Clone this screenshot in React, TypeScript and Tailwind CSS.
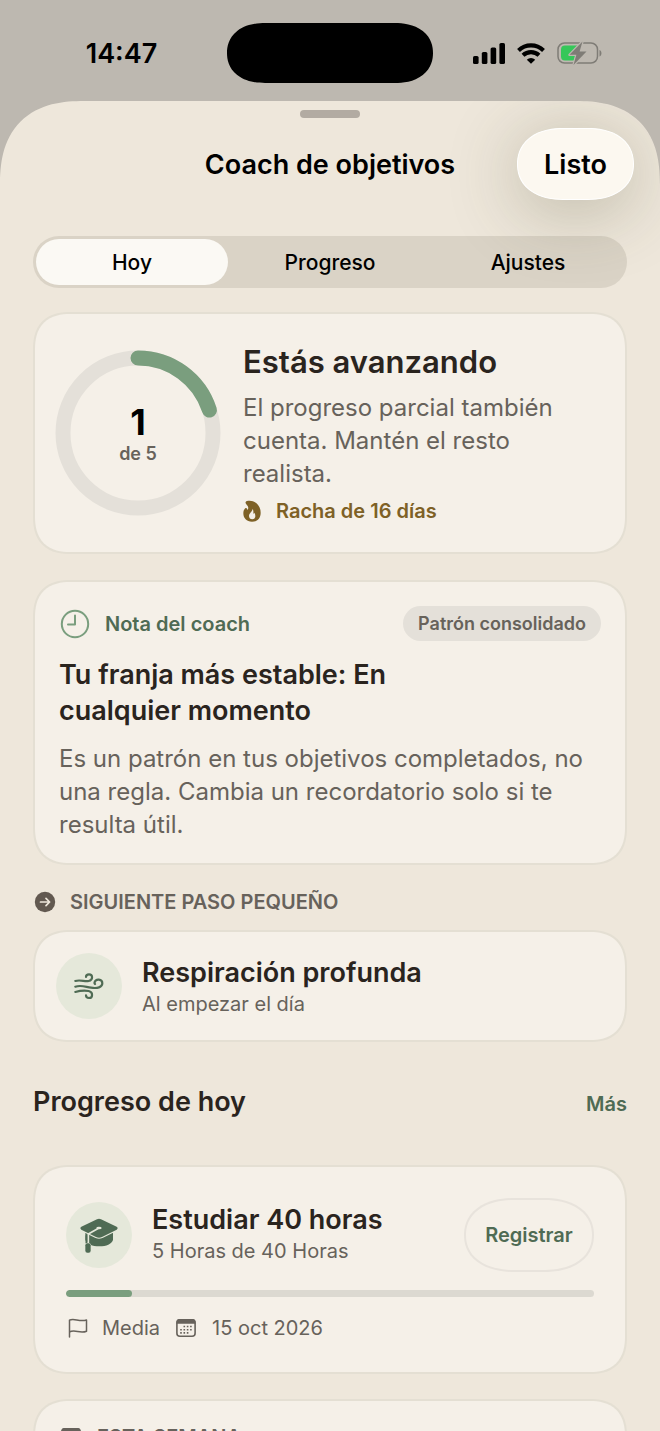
import { useState } from 'react';
import type { ReactNode } from 'react';

type Tab = 'Hoy' | 'Progreso' | 'Ajustes';

const TABS: Tab[] = ['Hoy', 'Progreso', 'Ajustes'];

function SignalIcon() {
  return (
    <svg width="32" height="21" viewBox="0 0 32 21" aria-hidden="true">
      <rect x="0" y="13" width="5.6" height="8" rx="1.6" />
      <rect x="8.8" y="9" width="5.6" height="12" rx="1.6" />
      <rect x="17.6" y="4.5" width="5.6" height="16.5" rx="1.6" />
      <rect x="26.4" y="0" width="5.6" height="21" rx="1.6" />
    </svg>
  );
}

function WifiIcon() {
  return (
    <svg width="28" height="21" viewBox="0 0 28 21" aria-hidden="true">
      <g fill="none" stroke="black" strokeWidth="4.1">
        <path d="M1.5 7.4a18 18 0 0 1 25 0" />
        <path d="M6 12.3a11.6 11.6 0 0 1 16 0" />
      </g>
      <path d="M14 20.8l-4.2-4.1a6 6 0 0 1 8.4 0z" />
    </svg>
  );
}

function BatteryIcon() {
  return (
    <svg width="46" height="24" viewBox="0 0 46 24" aria-hidden="true">
      <rect x="1" y="2" width="39.5" height="20" rx="6.5" fill="none" stroke="#7f7c76" strokeWidth="1.5" />
      <path d="M42.5 9v6.4c2.6-.8 2.6-5.6 0-6.4z" fill="#7f7c76" />
      <path d="M8 4.500h13l-6 9H19l-2.200 6H8a4 4 0 0 1-4-4v-7a4 4 0 0 1 4-4z" fill="#35c759" />
      <path
        d="M25.500 0.500L12.500 13.800h6.900L16.500 24 29.500 10.500h-6.900z"
        fill="#7f7c76"
        stroke="#bdb8b0"
        strokeWidth="2.4"
        strokeLinejoin="round"
        paintOrder="stroke"
      />
    </svg>
  );
}

function FlameIcon() {
  return (
    <svg width="18" height="22" viewBox="0 0 54 66" aria-hidden="true">
      <path
        d="M12 3C32-2 53 13 53 38c0 17-10 27-26 27S1 55 1 40c0-7 2-12 6-15 2-2 4-1 5 1l2 4c3-5 2-11-2-14l-4-6c-1-3 0-6 4-7z"
        fill="#7e6126"
      />
      <path
        d="M29 26c0 8-11 13-11 22 0 6 4 10 10 10 5 0 9-4 9-10 0-4-1-7-3-10-1 2-2 3-3 3 1-5 0-11-2-15z"
        fill="#f5f0e8"
      />
    </svg>
  );
}

function ClockIcon() {
  return (
    <svg width="30" height="30" viewBox="0 0 30 30" fill="none" stroke="#7a9e7e" strokeWidth="2" aria-hidden="true">
      <circle cx="15" cy="15" r="13.2" />
      <path d="M15 6.500V15.500H8" strokeLinecap="round" strokeLinejoin="round" />
    </svg>
  );
}

function ArrowCircleIcon() {
  return (
    <svg width="22" height="22" viewBox="0 0 22 22" aria-hidden="true">
      <circle cx="11" cy="11" r="10.2" fill="#625950" />
      <path
        d="M6.500 11h9M12 7.400l3.600 3.600-3.600 3.600"
        fill="none"
        stroke="#eee7db"
        strokeWidth="1.7"
        strokeLinecap="round"
        strokeLinejoin="round"
      />
    </svg>
  );
}

function WindIcon() {
  return (
    <svg
      width="30"
      height="28"
      viewBox="162 306 90 84"
      fill="none"
      stroke="#4f6b54"
      strokeWidth="6.5"
      strokeLinecap="round"
      aria-hidden="true"
    >
      <path d="M166 333c15-5 29 3 40 0 14-3 13-20 1-20-6 0-9 4-9 8" />
      <path d="M166 350c18-6 31 1 47 3 19 3 34-1 34-13 0-14-20-15-23-3-1 2 0 4 1 5" />
      <path d="M166 366c14-4 28-5 40-3 14 3 13 21 1 21-6 0-9-4-9-8" />
    </svg>
  );
}

function GraduationIcon() {
  return (
    <svg width="38" height="35" viewBox="179 202 114 105" aria-hidden="true">
      <path d="M195 246v22c6 12 20 19 42 19s36-7 41-19v-22z" fill="#4f6b54" />
      <path
        d="M230 206q6-3 12 0l47 22q6 4 0 9l-44 22q-9 4-18 0l-44-22q-6-5 0-9z"
        fill="#4f6b54"
        stroke="#e5e8da"
        strokeWidth="7"
        strokeLinejoin="round"
        paintOrder="stroke"
      />
      <path d="M236 232l-32 18v34" fill="none" stroke="#e5e8da" strokeWidth="5" strokeLinecap="round" strokeLinejoin="round" />
      <ellipse cx="236" cy="232" rx="8" ry="4" fill="#e5e8da" />
      <path d="M198 254v24" stroke="#4f6b54" strokeWidth="5" />
      <rect x="195" y="278" width="16" height="28" rx="6" fill="#4f6b54" stroke="#e5e8da" strokeWidth="3" paintOrder="stroke" />
    </svg>
  );
}

function FlagIcon() {
  return (
    <svg
      width="20"
      height="20"
      viewBox="0 0 20 20"
      fill="none"
      stroke="#67625b"
      strokeWidth="1.5"
      strokeLinecap="round"
      strokeLinejoin="round"
      aria-hidden="true"
    >
      <path d="M1.500 19V2.200C6-.5 11 4.300 18.500 2v11.200C12 16 7 11 1.500 14" />
    </svg>
  );
}

function CalendarIcon() {
  return (
    <svg width="20" height="20" viewBox="0 0 20 20" aria-hidden="true">
      <rect x="0.9" y="1.9" width="18.2" height="16.4" rx="3" fill="none" stroke="#67625b" strokeWidth="1.6" />
      <path d="M0.500 5.800V4a3 3 0 0 1 3-3h13a3 3 0 0 1 3 3v1.800z" fill="#67625b" />
      <g stroke="#67625b" strokeWidth="1.6" strokeDasharray="1.6 1.7">
        <path d="M7.500 8.500h9" />
        <path d="M4.200 11.700h12.300" />
        <path d="M4.200 14.900h9" />
      </g>
    </svg>
  );
}

function ProgressRing({ value, total }: { value: number; total: number }) {
  const r = 75;
  const length = 2 * Math.PI * r;

  return (
    <div className="grid shrink-0 place-items-center">
      <svg className="col-start-1 row-start-1 -rotate-90" width="166" height="166" viewBox="0 0 166 166" fill="none" aria-hidden="true">
        <circle cx="83" cy="83" r={r} stroke="#e4e0d9" strokeWidth="15" />
        <circle
          cx="83"
          cy="83"
          r={r}
          stroke="#7a9e7e"
          strokeWidth="15"
          strokeLinecap="round"
          strokeDasharray={`${(length * value) / total} ${length}`}
        />
      </svg>
      <div className="col-start-1 row-start-1 flex flex-col items-center pt-[6px]">
        <span className="text-[36px] leading-9 font-bold text-black">{value}</span>
        <span className="text-lg leading-7 font-semibold text-[#67625b]">de {total}</span>
      </div>
    </div>
  );
}

function Card({ className, children }: { className: string; children: ReactNode }) {
  return (
    <section
      className={`rounded-[38px] border-2 border-[#e4dfd3] bg-[#f5f0e8] [corner-shape:superellipse(1.3)] ${className}`}
    >
      {children}
    </section>
  );
}

function IconCircle({ children }: { children: ReactNode }) {
  return (
    <div className="flex size-[66px] shrink-0 items-center justify-center rounded-full bg-[#e5e8da]">
      {children}
    </div>
  );
}

export default function App() {
  const [tab, setTab] = useState<Tab>('Hoy');

  return (
    <div className="flex h-screen flex-col overflow-hidden bg-[#bdb8b0] font-['Inter',sans-serif] text-[#2a241e]">
      {/* Status bar */}
      <div className="grid shrink-0 grid-cols-[1fr_206px_1fr] items-center pt-[23px] pb-[18px]">
        <span className="pt-[2px] pl-4 text-center text-[27px] leading-8 font-semibold text-black">14:47</span>
        <div className="h-[60px] rounded-[38px/30px] bg-black [corner-shape:superellipse(1.15)]" />
        <div className="flex items-center gap-3 pl-10">
          <SignalIcon />
          <WifiIcon />
          <BatteryIcon />
        </div>
      </div>

      {/* Sheet */}
      <div className="flex min-h-0 flex-1 flex-col overflow-hidden rounded-t-[84px] bg-[#eee7db] [corner-shape:superellipse(1.3)]">
        <div className="mx-auto mt-[9px] h-2 w-[60px] shrink-0 rounded-full bg-[#b2aba2]" />
        <header className="z-10 grid shrink-0 grid-cols-[1fr_auto_1fr] items-center px-[26px] pt-[10px]">
          <h1 className="col-start-2 pt-[2px] text-[27px] leading-9 font-semibold text-black">Coach de objetivos</h1>
          <button
            type="button"
            className="h-[72px] w-[117px] justify-self-end rounded-[46px/36px] border border-white bg-[#fcf8f0] pt-[2px] text-[27px] font-semibold text-black shadow-[0_10px_72px_rgba(70,70,40,0.32)] [corner-shape:superellipse(1.15)]"
          >
            Listo
          </button>
        </header>

        <main className="min-h-0 flex-1 overflow-hidden px-[33px] pt-9">
          <div role="tablist" className="grid h-[52px] grid-cols-3 rounded-full bg-[#dad3c6] py-[3px]">
            {TABS.map((name) => (
              <button
                key={name}
                type="button"
                role="tab"
                aria-selected={tab === name}
                onClick={() => setTab(name)}
                className={`mx-[3px] rounded-full pt-px text-[21px] font-medium text-black ${tab === name ? 'bg-[#fbf9f4]' : ''}`}
              >
                {name}
              </button>
            ))}
          </div>

          <Card className="mt-6 flex items-center gap-[22px] py-7 pr-5 pl-5">
            <ProgressRing value={1} total={5} />
            <div className="min-w-0">
              <h2 className="text-[31px] leading-10 font-semibold">Estás avanzando</h2>
              <p className="mt-[9px] text-2xl leading-[33px] text-[#67625b]">
                El progreso parcial también cuenta. Mantén el resto realista.
              </p>
              <p className="mt-2 flex items-center gap-[15px] text-xl leading-[26px] font-semibold text-[#7e6126]">
                <FlameIcon />
                Racha de 16 días
              </p>
            </div>
          </Card>

          <Card className="mt-[26px] px-6 pt-6 pb-[22px]">
            <div className="flex items-center justify-between">
              <p className="flex items-center gap-[15px] pl-px text-xl font-semibold text-[#4f6b54]">
                <ClockIcon />
                Nota del coach
              </p>
              <span className="rounded-full bg-[#e4e0d9] px-[15px] text-lg leading-[35px] font-semibold text-[#67625b]">
                Patrón consolidado
              </span>
            </div>
            <h2 className="mt-4 max-w-[400px] text-[27px] leading-9 font-semibold">
              Tu franja más estable: En cualquier momento
            </h2>
            <p className="mt-[13px] text-2xl leading-[33px] text-[#67625b]">
              Es un patrón en tus objetivos completados, no una regla. Cambia un recordatorio solo si te resulta útil.
            </p>
          </Card>

          <h3 className="mt-[23px] flex items-center gap-[14px] pl-px text-xl leading-7 font-semibold text-[#67625b] uppercase">
            <ArrowCircleIcon />
            Siguiente paso pequeño
          </h3>

          <Card className="mt-[14px] flex items-center gap-5 px-[21px] py-[21px]">
            <IconCircle>
              <WindIcon />
            </IconCircle>
            <div>
              <h2 className="text-[27px] leading-9 font-semibold">Respiración profunda</h2>
              <p className="text-xl leading-[26px] text-[#67625b]">Al empezar el día</p>
            </div>
          </Card>

          <div className="mt-[42px] flex items-baseline justify-between">
            <h2 className="text-[27px] leading-9 font-semibold">Progreso de hoy</h2>
            <button type="button" className="text-xl leading-[26px] font-semibold text-[#4f6b54]">
              Más
            </button>
          </div>

          <Card className="mt-[45px] px-[31px] py-[31px]">
            <div className="flex items-center gap-5">
              <IconCircle>
                <GraduationIcon />
              </IconCircle>
              <div className="min-w-0 flex-1">
                <h3 className="text-[27px] leading-9 font-semibold">Estudiar 40 horas</h3>
                <p className="pb-1 text-xl leading-[26px] text-[#67625b]">5 Horas de 40 Horas</p>
              </div>
              <button
                type="button"
                className="h-[74px] w-[130px] shrink-0 rounded-[50px/37px] border-2 border-[#e8e3dc] text-xl font-semibold text-[#4f6b54] [corner-shape:superellipse(1.15)]"
              >
                Registrar
              </button>
            </div>
            <div
              role="progressbar"
              aria-label="Estudiar 40 horas"
              aria-valuenow={5}
              aria-valuemax={40}
              className="mt-[18px] h-[7px] overflow-hidden rounded-full bg-[#dcd9d1]"
            >
              <div className="h-full rounded-full bg-[#7a9e7e]" style={{ width: `${(5 / 40) * 100}%` }} />
            </div>
            <div className="mt-[18px] flex items-center gap-4 text-xl leading-[26px] text-[#67625b]">
              <span className="flex items-center gap-[14px] pl-0.5">
                <FlagIcon />
                Media
              </span>
              <span className="flex items-center gap-4">
                <CalendarIcon />
                15 oct 2026
              </span>
            </div>
          </Card>

          <Card className="mt-[25px] px-[26px] py-[22px]">
            <h3 className="flex items-center gap-4 text-xl leading-7 font-semibold text-[#67625b] uppercase">
              <CalendarIcon />
              Esta semana
            </h3>
          </Card>
        </main>
      </div>
    </div>
  );
}
